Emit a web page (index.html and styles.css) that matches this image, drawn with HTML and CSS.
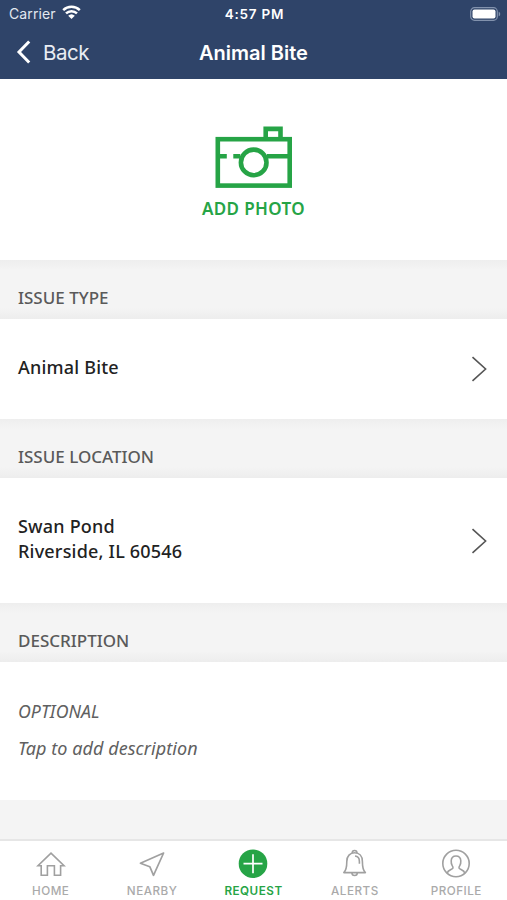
FILE: index.html
```html
<!DOCTYPE html>
<html lang="en">
<head>
    <meta charset="UTF-8">
    <meta name="viewport" content="width=device-width, initial-scale=1.0">
    <title>Animal Bite</title>
    <link rel="stylesheet" href="styles.css">
</head>
<body>
    <div class="app">
        <header class="header">
            <div class="status-bar">
                <div class="carrier">
                    <span>Carrier</span>
                    <svg class="wifi" width="19" height="14" viewBox="0 0 19 14">
                        <path d="M1.2 5.2a12 12 0 0 1 16.6 0M4 8.4a8 8 0 0 1 11 0" fill="none" stroke="#fff" stroke-width="2.5"/>
                        <path d="M6.2 10.7a4.8 4.8 0 0 1 6.6 0L9.5 14z" fill="#fff"/>
                    </svg>
                </div>
                <span class="time">4:57 PM</span>
                <svg class="battery" width="31" height="14" viewBox="0 0 31 14">
                    <rect x=".7" y=".7" width="26.6" height="12.6" rx="3.8" fill="none" stroke="#8292ad" stroke-width="1.2"/>
                    <rect x="2.5" y="2.5" width="23" height="9" rx="2" fill="#fff"/>
                    <path d="M28.7 4.7c2 .7 2 3.9 0 4.6z" fill="#8292ad"/>
                </svg>
            </div>
            <div class="nav-bar">
                <a class="back">
                    <svg width="15" height="24" viewBox="0 0 15 24">
                        <path d="M13.2 1.5 3 12l10.2 10.5" fill="none" stroke="#fff" stroke-width="3"/>
                    </svg>
                    <span>Back</span>
                </a>
                <h1>Animal Bite</h1>
            </div>
        </header>

        <main>
            <div class="photo">
                <svg width="78" height="64" viewBox="0 0 78 64" fill="none" stroke="#26a446" stroke-width="4.6">
                    <rect x="2.8" y="13.2" width="71.9" height="46.4"/>
                    <path d="M50.7 13.2V2.9h14.8v10.3"/>
                    <path d="M2.8 30.2h9M18.3 30.2h7M52 30.2h22" stroke-width="4.4"/>
                    <circle cx="38.7" cy="36.4" r="12.8"/>
                </svg>
                <span>ADD PHOTO</span>
            </div>

            <h2 class="section-title">ISSUE TYPE</h2>
            <div class="row row-type">
                <p>Animal Bite</p>
                <svg class="chevron" width="17" height="26" viewBox="0 0 17 26">
                    <path d="M1.5 1.2 14.6 13 1.5 24.8" fill="none" stroke="#555" stroke-width="1.6"/>
                </svg>
            </div>

            <h2 class="section-title">ISSUE LOCATION</h2>
            <div class="row row-location">
                <p>Swan Pond<br>Riverside, IL 60546</p>
                <svg class="chevron" width="17" height="26" viewBox="0 0 17 26">
                    <path d="M1.5 1.2 14.6 13 1.5 24.8" fill="none" stroke="#555" stroke-width="1.6"/>
                </svg>
            </div>

            <h2 class="section-title">DESCRIPTION</h2>
            <div class="description">
                <p class="optional">OPTIONAL</p>
                <p>Tap to add description</p>
            </div>
        </main>

        <nav class="tab-bar">
            <a class="tab">
                <svg width="30" height="30" viewBox="0 0 30 30" fill="none" stroke="#a0a0a0" stroke-width="1.6">
                    <path d="M5.2 16.7H2L15 4.1l13 12.6h-3.4v9.6h-6.2v-9.6h-7v9.6H5.2z"/>
                </svg>
                <span>HOME</span>
            </a>
            <a class="tab">
                <svg width="30" height="30" viewBox="0 0 30 30" fill="none" stroke="#a0a0a0" stroke-width="1.7" stroke-linejoin="round">
                    <path d="M26.6 4 3.4 14.2l9.4 3.5 3.7 8.6z"/>
                </svg>
                <span>NEARBY</span>
            </a>
            <a class="tab active">
                <svg width="30" height="30" viewBox="0 0 30 30">
                    <circle cx="15" cy="14.7" r="14.3" fill="#26a446"/>
                    <path d="M15 5.2v19M5.5 14.7h19" stroke="#fff" stroke-width="1.7"/>
                </svg>
                <span>REQUEST</span>
            </a>
            <a class="tab">
                <svg width="30" height="30" viewBox="0 0 30 30" fill="none" stroke="#a0a0a0" stroke-width="1.6" stroke-linejoin="round">
                    <path d="M3.8 23.6C6.4 21.4 6.8 18 6.8 12.5 6.8 7 10 3.8 14.6 3.8s7.8 3.2 7.8 8.7c0 5.5.4 8.9 3 11.1z"/>
                    <path d="M12.2 4c0-3.4 4.8-3.4 4.8 0M11.9 23.8c0 3.6 5.4 3.6 5.4 0M15 7c3 .2 4.4 2.4 4.4 5.4v2.4"/>
                </svg>
                <span>ALERTS</span>
            </a>
            <a class="tab">
                <svg width="30" height="30" viewBox="0 0 30 30" fill="none" stroke="#a0a0a0" stroke-width="1.6">
                    <circle cx="15" cy="14.5" r="13.2"/>
                    <path d="M6.2 24c.8-3.2 5-3.4 5.7-4.8.4-.9-.1-1.7-.7-2.6-.9-1.4-1.1-3-1-4.8.2-3.2 2.1-4.8 4.8-4.8s4.6 1.6 4.8 4.8c.1 1.8-.1 3.4-1 4.8-.6.9-1.1 1.7-.7 2.6.7 1.4 4.9 1.6 5.7 4.8"/>
                </svg>
                <span>PROFILE</span>
            </a>
        </nav>
    </div>
</body>
</html>
```

FILE: styles.css
```css
* {
    box-sizing: border-box;
}
body {
    font-family: "Noto Sans", sans-serif;
    margin: 0;
    background-color: #f4f4f4;
}
h1, h2, p {
    margin: 0;
}
svg {
    display: block;
    flex-shrink: 0;
}
.app {
    display: flex;
    flex-direction: column;
    height: 900px;
    overflow: hidden;
}
.header {
    height: 79px;
    background-color: #2f4469;
    color: white;
    font-family: Inter, sans-serif;
}
.status-bar {
    display: grid;
    grid-template-columns: 1fr auto 1fr;
    align-items: center;
    height: 27px;
    padding: 0 7px 0 9px;
}
.carrier {
    display: flex;
    align-items: center;
    gap: 6px;
    font-size: 14px;
    letter-spacing: 0.1px;
    color: #e3e8f0;
}
.wifi {
    margin-top: -3px;
}
.time {
    font-size: 13.5px;
    font-weight: 600;
    letter-spacing: 0.75px;
}
.battery {
    justify-self: end;
    margin-right: -1px;
}
.nav-bar {
    display: grid;
    grid-template-columns: 1fr auto 1fr;
    align-items: center;
    height: 50px;
    padding: 0 16px;
}
.back {
    display: flex;
    align-items: center;
    gap: 12px;
    font-size: 20.5px;
    letter-spacing: -0.5px;
    color: #e9edf4;
}
.nav-bar h1 {
    font-size: 20px;
    line-height: 24px;
    margin-top: 2px;
    font-weight: 600;
}
.photo {
    display: flex;
    flex-direction: column;
    align-items: center;
    height: 181px;
    padding-top: 47px;
    background-color: white;
    color: #26a446;
    font-size: 17px;
    font-weight: 600;
    letter-spacing: 0.4px;
}
.photo span {
    line-height: 24px;
    margin-top: 7px;
}
.section-title {
    height: 59px;
    padding: 25px 18px 0;
    line-height: 25px;
    font-size: 17px;
    font-weight: 500;
    color: #5a5a5a;
    background: linear-gradient(#eee, #f4f4f4 10px, #f4f4f4 48px, #ededed);
}
.row {
    display: flex;
    align-items: center;
    justify-content: space-between;
    padding: 0 19px 0 18px;
    background-color: white;
    color: #222;
    font-size: 18px;
    line-height: 25px;
    font-weight: 550;
    letter-spacing: 0.2px;
}
.row p {
    margin-top: -3px;
}
.row-type {
    height: 100px;
}
.row-location {
    height: 125px;
}
.description {
    height: 138px;
    padding: 37px 18px 0;
    background-color: white;
    color: #606060;
    font-size: 18px;
    line-height: 25px;
    letter-spacing: 0.07px;
    font-style: italic;
}
.optional {
    margin-bottom: 12px;
    font-size: 17.7px;
}
.tab-bar {
    display: grid;
    grid-template-columns: repeat(5, 1fr);
    height: 61px;
    margin-top: auto;
    padding-top: 8px;
    border-top: 2px solid #e6e6e6;
    background-color: white;
}
.tab {
    display: flex;
    flex-direction: column;
    align-items: center;
    color: #aaa;
    font-family: Inter, sans-serif;
    font-size: 11.7px;
    font-weight: 500;
    letter-spacing: 0.5px;
}
.tab span {
    line-height: 16px;
    margin-top: 4px;
}
.tab.active {
    color: #26a446;
    font-weight: 600;
}
```
